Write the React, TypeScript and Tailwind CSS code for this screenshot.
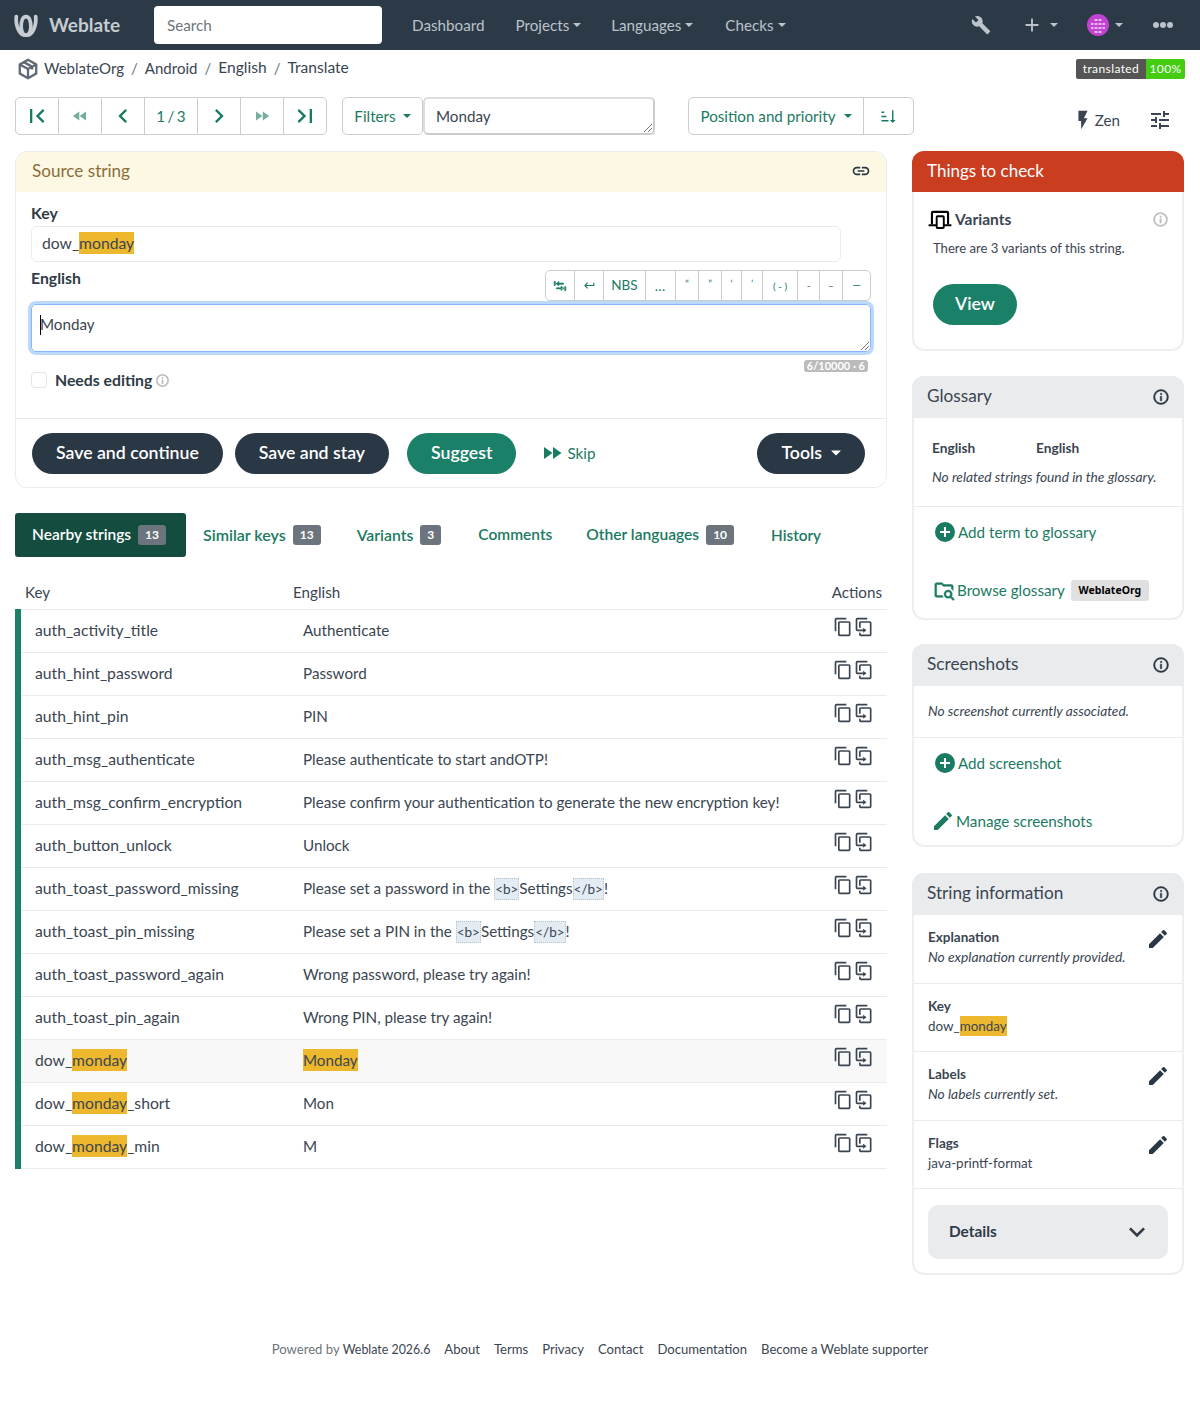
import type { ReactNode } from "react";

const mdi = {
  copy: "M19,21H8V7H19M19,5H8A2,2 0 0,0 6,7V21A2,2 0 0,0 8,23H19A2,2 0 0,0 21,21V7A2,2 0 0,0 19,5M16,1H4A2,2 0 0,0 2,3V17H4V3H16V1Z",
  clone: "M11,17H4A2,2 0 0,1 2,15V3A2,2 0 0,1 4,1H16V3H4V15H11V13L15,16L11,19V17M19,21V7H8V13H6V7A2,2 0 0,1 8,5H19A2,2 0 0,1 21,7V21A2,2 0 0,1 19,23H8A2,2 0 0,1 6,21V19H8V21H19Z",
  pencil: "M20.71,7.04C21.1,6.65 21.1,6 20.71,5.63L18.37,3.29C18,2.9 17.35,2.9 16.96,3.29L15.12,5.12L18.87,8.87M3,17.25V21H6.75L17.81,9.93L14.06,6.18L3,17.25Z",
  info: "M11,9H13V7H11M12,20C7.59,20 4,16.41 4,12C4,7.59 7.59,4 12,4C16.41,4 20,7.59 20,12C20,16.41 16.41,20 12,20M12,2A10,10 0 0,0 2,12A10,10 0 0,0 12,22A10,10 0 0,0 22,12A10,10 0 0,0 12,2M11,17H13V11H11V17Z",
  plusCircle: "M17,13H13V17H11V13H7V11H11V7H13V11H17M12,2A10,10 0 0,0 2,12A10,10 0 0,0 12,22A10,10 0 0,0 22,12A10,10 0 0,0 12,2Z",
  plus: "M19,13H13V19H11V13H5V11H11V5H13V11H19V13Z",
  wrench: "M22.7,19L13.6,9.9C14.5,7.6 14,4.9 12.1,3C10.1,1 7.1,0.6 4.7,1.7L9,6L6,9L1.6,4.7C0.4,7.1 0.9,10.1 2.9,12.1C4.8,14 7.5,14.5 9.8,13.6L18.9,22.7C19.3,23.1 19.9,23.1 20.3,22.7L22.6,20.4C23.1,20 23.1,19.3 22.7,19Z",
  link: "M3.9,12C3.9,10.29 5.29,8.9 7,8.9H11V7H7A5,5 0 0,0 2,12A5,5 0 0,0 7,17H11V15.1H7C5.29,15.1 3.9,13.71 3.9,12M8,13H16V11H8V13M17,7H13V8.9H17C18.71,8.9 20.1,10.29 20.1,12C20.1,13.71 18.71,15.1 17,15.1H13V17H17A5,5 0 0,0 22,12A5,5 0 0,0 17,7Z",
  flash: "M7,2V13H10V22L17,10H13L17,2H7Z",
  tune: "M3,17V19H9V17H3M3,5V7H13V5H3M13,21V19H21V17H13V15H11V21H13M7,9V11H3V13H7V15H9V9H7M21,13V11H11V13H21M15,9H17V7H21V5H17V3H15V9Z",
  first: "M18.41,16.59L13.82,12L18.41,7.41L17,6L11,12L17,18L18.41,16.59M6,6H8V18H6V6Z",
  last: "M5.59,7.41L10.18,12L5.59,16.59L7,18L13,12L7,6L5.59,7.41M16,6H18V18H16V6Z",
  left: "M15.41,16.58L10.83,12L15.41,7.41L14,6L8,12L14,18L15.41,16.58Z",
  right: "M8.59,16.58L13.17,12L8.59,7.41L10,6L16,12L10,18L8.59,16.58Z",
  rewind: "M11.5,12L20,18V6M11,18V6L2.5,12L11,18Z",
  forward: "M13,6V18L21.5,12M4,18L12.5,12L4,6V18Z",
  down: "M7.41,8.58L12,13.17L16.59,8.58L18,10L12,16L6,10L7.41,8.58Z",
  enter: "M19,7V11H5.83L9.41,7.41L8,6L2,12L8,18L9.41,16.58L5.83,13H21V7H19Z",
  sort: "M19 17H22L18 21L14 17H17V3H19V17M2 17H12V19H2V17M6 5V7H2V5H6M2 11H9V13H2V11Z",
  tabs: "M2 4H4V11H2V4M20 13H22V20H20V13M6 7H18V9H6V7M6 8L10 4V12L6 8M6 15H18V17H6V15M18 16L14 12V20L18 16Z",
  folder: "M16.5,12C19,12 21,14 21,16.5C21,17.38 20.75,18.21 20.31,18.9L23.39,22L22,23.39L18.88,20.32C18.19,20.75 17.37,21 16.5,21C14,21 12,19 12,16.5C12,14 14,12 16.5,12M16.5,14A2.5,2.5 0 0,0 14,16.5A2.5,2.5 0 0,0 16.5,19A2.5,2.5 0 0,0 19,16.5A2.5,2.5 0 0,0 16.5,14M4,6V18H10.2C10.4,18.7 10.7,19.4 11.1,20H4A2,2 0 0,1 2,18V6A2,2 0 0,1 4,4H10L12,6H20A2,2 0 0,1 22,8V12.5C21.4,11.8 20.7,11.2 20,10.8V8H11.2L9.2,6H4Z",
};

function Icon({ d, className }: { d: string; className: string }) {
  return (
    <svg viewBox="0 0 24 24" className={`shrink-0 fill-current ${className}`}>
      <path d={d} />
    </svg>
  );
}

function Caret({ className = "" }: { className?: string }) {
  return (
    <span
      className={`inline-block h-0 w-0 border-x-[4px] border-t-[4px] border-x-transparent border-t-current ${className}`}
    />
  );
}

function Mark({ children }: { children: ReactNode }) {
  return <span className="bg-[#edb72e] py-[2px] text-[#3c4650]">{children}</span>;
}

function Code({ children }: { children: ReactNode }) {
  return (
    <span className="border border-dotted border-[#b5c4cf] bg-[#e3ecf2] py-[2px] text-[13.5px]">
      {children}
    </span>
  );
}

function Badge({ children }: { children: ReactNode }) {
  return (
    <span className="ml-[7px] inline-flex h-5 items-center rounded-[3px] bg-[#6c757d] px-[7px] text-[12px] font-bold text-white">
      {children}
    </span>
  );
}

function Pill({ children, green }: { children: ReactNode; green?: boolean }) {
  return (
    <button
      type="button"
      className={`flex h-[41px] items-center gap-[9px] rounded-full px-6 text-[17.7px] font-semibold text-white ${green ? "bg-[#1a8068]" : "bg-[#2a3744]"}`}
    >
      {children}
    </button>
  );
}

function NavItem({ label, caret, className = "" }: { label: string; caret?: boolean; className?: string }) {
  return (
    <a className={`flex items-center gap-[4px] text-[15.2px] text-[#bcc3ca] ${className}`}>
      {label}
      {caret && <Caret />}
    </a>
  );
}

function Logo() {
  return (
    <svg viewBox="0 0 29 27" className="h-[25px] w-[28px] fill-none stroke-[#c6ccd2]">
      <path d="M4 4C3 15 8 24 14 24C19 24 20.500 17 19.500 11C18.800 6.500 16.500 4 14.500 4" strokeWidth="4" strokeLinecap="round" />
      <path d="M25 4C26 15 21 24 15 24C10 24 8.500 17 9.500 11C10.200 6.500 12.500 4 14.500 4" strokeWidth="4" strokeLinecap="round" />
    </svg>
  );
}

function Header() {
  return (
    <header className="flex h-[50px] items-center bg-[#2c3a48] pl-3">
      <Logo />
      <span className="ml-[9px] text-[19px] font-bold text-[#c6ccd2]">Weblate</span>
      <div className="ml-[34px] flex h-[38px] w-[228px] items-center rounded-[4px] bg-white px-[13px] text-[15.2px] text-[#6c757d]">
        Search
      </div>
      <NavItem label="Dashboard" className="ml-[30px]" />
      <NavItem label="Projects" caret className="ml-[31px]" />
      <NavItem label="Languages" caret className="ml-[30px]" />
      <NavItem label="Checks" caret className="ml-[32px]" />
      <div className="ml-auto flex items-center pr-[27px] text-[#bcc3ca]">
        <Icon d={mdi.wrench} className="mr-[30px] h-5 w-5" />
        <Icon d={mdi.plus} className="mr-[7px] h-[22px] w-[22px]" />
        <Caret className="mr-[29px]" />
        <svg viewBox="0 0 22 22" className="mr-[6px] h-[22px] w-[22px]">
          <circle cx="11" cy="11" r="11" fill="#c243d2" />
          <path d="M7 5h8v2H7zM4 9h14v2H4zM4 13h14v2H4zM7 17h8v2H7z" fill="#eab6f0" />
          <path d="M7 5v14M11 5v14M15 5v14" stroke="#c243d2" strokeWidth="1" />
        </svg>
        <Caret className="mr-[30px]" />
        <span className="flex gap-[1px]">
          <i className="h-[6px] w-[6px] rounded-full bg-current" />
          <i className="h-[6px] w-[6px] rounded-full bg-current" />
          <i className="h-[6px] w-[6px] rounded-full bg-current" />
        </span>
      </div>
    </header>
  );
}

function Breadcrumb() {
  return (
    <div className="flex h-[47px] items-start justify-between pl-[17px] pr-[15px] pt-[8px] text-[15px] text-[#3a4551]">
      <div className="flex h-[20px] items-center">
        <svg viewBox="0 0 24 24" className="mr-[5px] mt-[2px] h-[22px] w-[22px] fill-none stroke-[#5f6973] stroke-[2.5]">
          <path d="M12 2 21 7v10l-9 5-9-5V7z" />
          <path d="M3 7l9 5 9-5M12 12v10M7.500 4.500 16.500 9.500v3" />
        </svg>
        <span>WeblateOrg</span>
        <span className="mx-[7px] text-[#6c757d]">/</span>
        <span>Android</span>
        <span className="mx-[7px] text-[#6c757d]">/</span>
        <span className="text-[15.6px]">English</span>
        <span className="mx-[7px] text-[#6c757d]">/</span>
        <span className="text-[15.6px]">Translate</span>
      </div>
      <div className="mt-[1px] flex h-5 overflow-hidden rounded-[2px] text-[12px] tracking-[0.4px] text-white">
        <span className="flex w-[70px] items-center justify-center bg-[#555]">translated</span>
        <span className="flex w-[39px] items-center justify-center bg-[#4c1]">100%</span>
      </div>
    </div>
  );
}

function PagerBtn({ d, w, faded }: { d: string; w: string; faded?: boolean }) {
  return (
    <a className={`flex items-center justify-center border-r border-[#ccc] last:border-r-0 ${w}`}>
      <Icon d={d} className={faded ? "h-[18px] w-[18px] opacity-60" : "h-7 w-7"} />
    </a>
  );
}

function Toolbar() {
  return (
    <div className="flex h-[38px] px-[15px] text-[15.2px] text-[#1a7a62]">
      <div className="flex w-[312px] rounded-[5px] border border-[#ccc]">
        <PagerBtn d={mdi.first} w="w-[43px]" />
        <PagerBtn d={mdi.rewind} w="w-[43px]" faded />
        <PagerBtn d={mdi.left} w="w-[43px]" />
        <span className="flex w-[53px] items-center justify-center border-r border-[#ccc] [word-spacing:-1.5px]">1 / 3</span>
        <PagerBtn d={mdi.right} w="w-[43px]" />
        <PagerBtn d={mdi.forward} w="w-[43px]" faded />
        <PagerBtn d={mdi.last} w="flex-1" />
      </div>
      <div className="ml-[15px] flex w-[81px] items-center justify-center gap-[7px] rounded-[5px] border border-[#ccc]">
        Filters <Caret />
      </div>
      <div className="relative flex w-[232px] items-center rounded-[5px] border-2 border-b-[#ccc] border-l-[#ddd] border-r-[#ccc] border-t-[#ddd] pl-[11px] text-[#3a4551]">
        Monday
        <ResizeGrip />
      </div>
      <div className="ml-[33px] flex w-[226px] rounded-[5px] border border-[#ccc]">
        <span className="flex w-[175px] items-center justify-center gap-[8px] border-r border-[#ccc]">
          Position and priority <Caret />
        </span>
        <span className="flex flex-1 items-center justify-center">
          <Icon d={mdi.sort} className="h-[17px] w-[17px]" />
        </span>
      </div>
      <div className="ml-auto flex items-center pt-[8px] text-[#3a4551]">
        <Icon d={mdi.flash} className="h-[22px] w-[22px]" />
        <span className="ml-[1px] mr-[28px]">Zen</span>
        <Icon d={mdi.tune} className="mr-[13px] h-6 w-6" />
      </div>
    </div>
  );
}

function ResizeGrip() {
  return (
    <svg viewBox="0 0 8 8" className="absolute bottom-[1px] right-[1px] h-[8px] w-[8px] stroke-[#555]">
      <path d="M0 8 8 0M4 8 8 4" strokeWidth="0.8" />
    </svg>
  );
}

const specials: { label: ReactNode; w: string; cls?: string }[] = [
  { label: <Icon d={mdi.tabs} className="h-[14px] w-[14px] stroke-current stroke-[1]" />, w: "w-[29px]" },
  { label: <Icon d={mdi.enter} className="h-[13px] w-[13px]" />, w: "w-[29px]" },
  { label: "NBS", w: "w-[42px]", cls: "text-[13.5px]" },
  { label: "…", w: "w-[30px]", cls: "text-[14px] tracking-[1px]" },
  { label: "“", w: "w-[23px]", cls: "text-[10px] pb-[4px]" },
  { label: "”", w: "w-[23px]", cls: "text-[10px] pb-[4px]" },
  { label: "‘", w: "w-[20px]", cls: "text-[10px] pb-[4px]" },
  { label: "’", w: "w-[21px]", cls: "text-[10px] pb-[4px]" },
  { label: "( - )", w: "w-[35px]", cls: "text-[10px] pt-[2px]" },
  { label: "-", w: "w-[22px]", cls: "text-[10px]" },
  { label: "–", w: "w-[23px]", cls: "text-[10px]" },
  { label: "—", w: "flex-1", cls: "text-[11px]" },
];

function SourceCard() {
  return (
    <section className="h-[337px] rounded-[12px] border border-[#e9ecef]">
      <div className="flex h-[40px] items-center justify-between rounded-t-[12px] bg-[#fcf8e3] pb-[2px] pl-[16px] pr-[15px] text-[17.100px] text-[#8a6d3b]">
        Source string
        <Icon d={mdi.link} className="h-5 w-5 text-[#2a3744]" />
      </div>
      <div className="px-[15px] pt-[11px] text-[#3a4551]">
        <div className="text-[15.800px] font-bold leading-[20px] text-[#2f3b47]">Key</div>
        <div className="mt-[3px] flex h-[36px] w-[810px] items-center rounded-[5px] border border-[#e9ecef] px-[10px] pb-[1px] text-[15.700px]">
          <span>
            dow_<Mark>monday</Mark>
          </span>
        </div>
        <div className="flex h-[42px] items-start justify-between">
          <div className="mt-[6px] text-[15.800px] font-bold leading-[20px] text-[#2f3b47]">English</div>
          <div className="mt-[8px] flex h-[31px] w-[326px] rounded-[5px] border border-[#ccc] text-[#1a7a62]">
            {specials.map((s, i) => (
              <span
                key={i}
                className={`flex items-center justify-center border-r border-[#ccc] last:border-r-0 ${s.w} ${s.cls ?? ""}`}
              >
                {s.label}
              </span>
            ))}
          </div>
        </div>
        <div className="relative h-[48px] rounded-[5px] border border-[#86b7fe] pl-[8px] pt-[9px] text-[15.200px] leading-[20px] shadow-[0_0_0_3px_#bcd9fb]">
          <span className="absolute left-[8px] top-[10px] h-[20px] w-px bg-black" />
          Monday
          <ResizeGrip />
        </div>
        <div className="flex justify-end pr-[3px] pt-[8px]">
          <span className="flex h-[12px] items-center rounded-[3px] bg-[#bbb] px-[3px] text-[11px] font-bold text-white">
            6/10000 · 6
          </span>
        </div>
        <div className="flex h-[16px] items-center">
          <span className="h-4 w-4 rounded-[4px] border border-[#e3e6e9]" />
          <span className="ml-[8px] text-[15.800px] font-bold text-[#2f3b47]">Needs editing</span>
          <Icon d={mdi.info} className="ml-[3px] h-[15px] w-[15px] stroke-current stroke-[0.5] text-[#b5b5b5]" />
        </div>
      </div>
      <div className="mt-[30px] flex h-[69px] items-center border-t border-[#e9ecef] pl-[16px] pr-[21px]">
        <Pill>Save and continue</Pill>
        <span className="w-[12px]" />
        <Pill>Save and stay</Pill>
        <span className="w-[18px]" />
        <Pill green>Suggest</Pill>
        <a className="ml-[24px] flex items-center gap-[3px] text-[15.200px] text-[#1a7a62]">
          <Icon d={mdi.forward} className="h-6 w-6" />
          Skip
        </a>
        <span className="ml-auto">
          <Pill>
            Tools <Caret className="mx-[1px] scale-125" />
          </Pill>
        </span>
      </div>
    </section>
  );
}

function Tabs() {
  const tab = "flex h-[44px] items-center font-semibold text-[#1a7a62]";
  return (
    <nav className="mt-[25px] flex">
      <a className="flex h-[44px] w-[171px] items-center rounded-[3px] bg-[#144d3f] pl-[17px] text-[15.500px] font-semibold text-white">
        Nearby strings <Badge>13</Badge>
      </a>
      <a className={`${tab} ml-[17px] text-[16px]`}>
        Similar keys <Badge>13</Badge>
      </a>
      <a className={`${tab} ml-[36px] text-[15.800px]`}>
        Variants <Badge>3</Badge>
      </a>
      <a className={`${tab} ml-[37px] text-[15.500px]`}>Comments</a>
      <a className={`${tab} ml-[34px] text-[15.600px]`}>
        Other languages <Badge>10</Badge>
      </a>
      <a className={`${tab} ml-[37px] text-[15.300px]`}>History</a>
    </nav>
  );
}

const rows: { key: ReactNode; text: ReactNode; current?: boolean }[] = [
  { key: "auth_activity_title", text: "Authenticate" },
  { key: "auth_hint_password", text: "Password" },
  { key: "auth_hint_pin", text: "PIN" },
  { key: "auth_msg_authenticate", text: "Please authenticate to start andOTP!" },
  { key: "auth_msg_confirm_encryption", text: "Please confirm your authentication to generate the new encryption key!" },
  { key: "auth_button_unlock", text: "Unlock" },
  {
    key: "auth_toast_password_missing",
    text: (
      <>
        Please set a password in the <Code>&lt;b&gt;</Code>Settings<Code>&lt;/b&gt;</Code>!
      </>
    ),
  },
  {
    key: "auth_toast_pin_missing",
    text: (
      <>
        Please set a PIN in the <Code>&lt;b&gt;</Code>Settings<Code>&lt;/b&gt;</Code>!
      </>
    ),
  },
  { key: "auth_toast_password_again", text: "Wrong password, please try again!" },
  { key: "auth_toast_pin_again", text: "Wrong PIN, please try again!" },
  {
    key: (
      <>
        dow_<Mark>monday</Mark>
      </>
    ),
    text: <Mark>Monday</Mark>,
    current: true,
  },
  {
    key: (
      <>
        dow_<Mark>monday</Mark>_short
      </>
    ),
    text: "Mon",
  },
  {
    key: (
      <>
        dow_<Mark>monday</Mark>_min
      </>
    ),
    text: "M",
  },
];

function StringsTable() {
  return (
    <table className="mt-[25px] w-full table-fixed border-collapse text-[15.200px] text-[#3a4551]">
      <thead>
        <tr className="h-[27px] border-b border-[#e9ecef] text-left">
          <th className="w-[268px] pl-[7px] align-top font-normal leading-[20px]">Key</th>
          <th className="pl-[7px] align-top font-normal leading-[20px]">English</th>
          <th className="w-[70px] pr-[5px] text-right align-top font-normal leading-[20px]">Actions</th>
        </tr>
      </thead>
      <tbody>
        {rows.map((r, i) => (
          <tr key={i} className={`h-[43px] border-b border-[#e9ecef] ${r.current ? "bg-[#f8f8f8]" : ""}`}>
            <td className="border-l-[6px] border-[#1a8068] pl-[14px] pt-[1px] text-[15.700px]">{r.key}</td>
            <td className="pl-[17px]">{r.text}</td>
            <td className="pt-[7px] align-top">
              <div className="flex justify-end gap-px pr-[13px] text-[#3a4551]">
                <Icon d={mdi.copy} className="h-5 w-5" />
                <Icon d={mdi.clone} className="h-5 w-5" />
              </div>
            </td>
          </tr>
        ))}
      </tbody>
    </table>
  );
}

function Panel({ title, children, className = "" }: { title: string; children: ReactNode; className?: string }) {
  return (
    <section className={`rounded-[12px] border-2 border-[#eceef0] ${className}`}>
      <div className="-mx-[2px] -mt-[2px] flex h-[42px] items-center justify-between rounded-t-[12px] bg-[#e9ebed] pl-[15px] pr-[14px] text-[17.200px] text-[#3a4551]">
        <span className="pb-[2px]">{title}</span>
        <Icon d={mdi.info} className="h-[18px] w-[18px] stroke-current stroke-[0.6] text-[#2a3744]" />
      </div>
      {children}
    </section>
  );
}

function ThingsToCheck() {
  return (
    <section className="h-[200px] rounded-[12px] border-2 border-[#eceef0]">
      <div className="-mx-[2px] -mt-[2px] flex h-[41px] items-center rounded-t-[12px] bg-[#cb3d1f] pb-[2px] pl-[15px] text-[17px] text-white">
        Things to check
      </div>
      <div className="flex items-center pl-[14px] pr-[13px] pt-[16px] text-[#3a4551]">
        <svg viewBox="0 0 24 20" className="h-[19px] w-[24px] fill-none stroke-black">
          <path d="M3.500 15V3a1 1 0 0 1 1-1h15a1 1 0 0 1 1 1v12" strokeWidth="2.200" />
          <path d="M0 16h8M16 16h8" strokeWidth="2.200" />
          <rect x="8.500" y="6.500" width="7.500" height="12.500" rx="1" strokeWidth="2" fill="#fff" />
        </svg>
        <span className="ml-[3px] text-[15.500px] font-bold">Variants</span>
        <Icon d={mdi.info} className="ml-auto h-[17px] w-[17px] stroke-current stroke-[0.5] text-[#bbb]" />
      </div>
      <p className="ml-[19px] mt-[7px] text-[13.100px] leading-[20px] text-[#3a4551]">There are 3 variants of this string.</p>
      <div className="ml-[19px] mt-[26px] flex h-[41px] w-[84px] items-center justify-center rounded-full bg-[#1a8068] text-[17.700px] font-semibold text-white">
        View
      </div>
    </section>
  );
}

function Glossary() {
  return (
    <Panel title="Glossary" className="mt-[25px] h-[244px]">
      <div className="flex pl-[18px] pt-[20px] text-[13.700px] font-bold leading-[20px] text-[#3a4551]">
        <span className="w-[104px]">English</span>
        <span>English</span>
      </div>
      <p className="ml-[18px] mt-[9px] text-[13.750px] italic leading-[20px] text-[#3a4551]">No related strings found in the glossary.</p>
      <div className="mt-[19px] border-t border-[#e9ecef]" />
      <a className="ml-[19px] mt-[13px] flex items-center gap-px text-[15.200px] text-[#1a7a62]">
        <Icon d={mdi.plusCircle} className="h-6 w-6" />
        Add term to glossary
      </a>
      <a className="ml-[19px] mt-[35px] flex items-center text-[15.200px] text-[#1a7a62]">
        <Icon d={mdi.folder} className="mr-[2px] h-[22px] w-[22px] stroke-current stroke-[0.5]" />
        Browse glossary
        <span className="ml-[6px] flex h-[21px] w-[78px] items-center justify-center rounded-[3px] bg-[#e0e0e0] text-[10.500px] font-bold text-black [font-family:'Noto_Sans',sans-serif]">
          WeblateOrg
        </span>
      </a>
    </Panel>
  );
}

function Screenshots() {
  return (
    <Panel title="Screenshots" className="mt-[24px] h-[203px]">
      <p className="ml-[14px] mt-[15px] text-[13.700px] italic leading-[20px] text-[#3a4551]">No screenshot currently associated.</p>
      <div className="mt-[16px] border-t border-[#e9ecef]" />
      <a className="ml-[19px] mt-[13px] flex items-center gap-px text-[15.200px] text-[#1a7a62]">
        <Icon d={mdi.plusCircle} className="h-6 w-6" />
        Add screenshot
      </a>
      <a className="ml-[17px] mt-[34px] flex items-center gap-px text-[15.200px] text-[#1a7a62]">
        <Icon d={mdi.pencil} className="h-6 w-6" />
        Manage screenshots
      </a>
    </Panel>
  );
}

function InfoRow({ label, children, edit }: { label: string; children: ReactNode; edit?: boolean }) {
  return (
    <div className="relative h-[68.500px] border-b border-[#e9ecef] pl-[14px] pt-[12px] text-[13.400px] leading-[20px] text-[#3a4551]">
      <div className="text-[13.500px] font-bold">{label}</div>
      <div>{children}</div>
      {edit && <Icon d={mdi.pencil} className="absolute right-[12px] top-[12px] h-6 w-6 text-[#2a3744]" />}
    </div>
  );
}

function StringInfo() {
  return (
    <Panel title="String information" className="mt-[26px] h-[402px]">
      <InfoRow label="Explanation" edit>
        <em className="text-[13.800px]">No explanation currently provided.</em>
      </InfoRow>
      <InfoRow label="Key">
        dow_<Mark>monday</Mark>
      </InfoRow>
      <InfoRow label="Labels" edit>
        <em className="text-[13.800px]">No labels currently set.</em>
      </InfoRow>
      <InfoRow label="Flags" edit>
        java-printf-format
      </InfoRow>
      <div className="mx-[14px] mt-[16px] flex h-[54px] items-center justify-between rounded-[10px] bg-[#e9ebed] pl-[21px] pr-[15px] text-[15.400px] font-bold text-[#2f3b47]">
        Details
        <Icon d={mdi.down} className="h-8 w-8" />
      </div>
    </Panel>
  );
}

function Footer() {
  const links = ["About", "Terms", "Privacy", "Contact", "Documentation", "Become a Weblate supporter"];
  return (
    <footer className="mt-[65px] flex h-[20px] items-center justify-center gap-[14px] text-[13.100px] text-[#3a4551]">
      <span>
        <span className="text-[#6c757d]">Powered by</span> <span className="text-[12.400px]">Weblate 2026.6</span>
      </span>
      {links.map((l) => (
        <a key={l}>{l}</a>
      ))}
    </footer>
  );
}

export default function App() {
  return (
    <div className="min-h-[1408px] bg-white [font-family:Lato,sans-serif]">
      <Header />
      <Breadcrumb />
      <Toolbar />
      <main className="mt-[16px] flex gap-[25px] px-[15px]">
        <div className="w-[872px] shrink-0">
          <SourceCard />
          <Tabs />
          <StringsTable />
        </div>
        <aside className="w-[272px] shrink-0">
          <ThingsToCheck />
          <Glossary />
          <Screenshots />
          <StringInfo />
        </aside>
      </main>
      <Footer />
    </div>
  );
}
